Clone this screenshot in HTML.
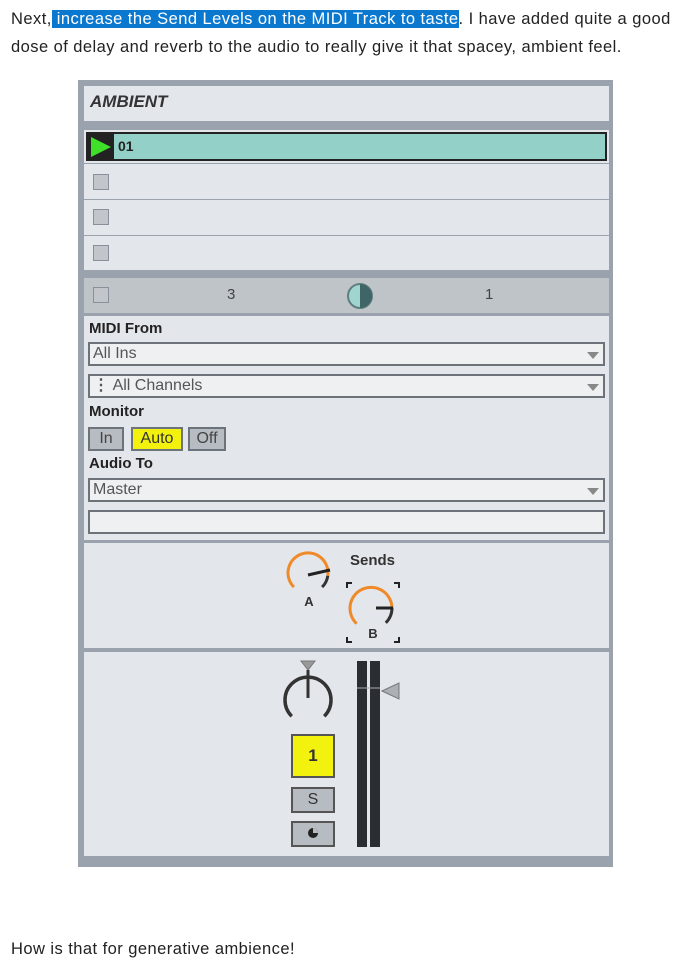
<!DOCTYPE html>
<html><head><meta charset="utf-8"><style>
*{margin:0;padding:0;box-sizing:border-box}
body{width:681px;height:965px;background:#fff;position:relative;overflow:hidden;font-family:"Liberation Sans",sans-serif;color:#222}
.t{position:absolute;left:11px;font-size:16.5px;letter-spacing:0.45px;white-space:nowrap;line-height:20px}
.hl{background:#0b78d0;color:#fff}
.a{position:absolute}
.p{position:absolute;background:#e3e6ea}
.row{position:absolute;left:84px;width:525px;background:#e3e6ea;border-bottom:1px solid #9ba3ad}
.cb{position:absolute;left:93px;width:16px;height:16px;background:#c2c6cb;border:1px solid #8a9099}
.lbl{position:absolute;left:89px;font-weight:bold;font-size:15px;color:#222}
.dd{position:absolute;left:88px;width:517px;height:24px;border:2px solid #6d737a;background:#eef0f2;font-size:16px;color:#555;padding-left:3px;line-height:20px}
.dd .ar{position:absolute;right:4px;top:8px;width:0;height:0;border-left:6px solid transparent;border-right:6px solid transparent;border-top:7px solid #888}
.btn{position:absolute;top:427px;height:24px;border:2px solid #6d737a;background:#b7bcc2;font-size:16px;color:#444;text-align:center;line-height:20px}
</style></head><body>
<div class="t" style="top:9px">Next,<span class="hl"> increase the Send Levels on the MIDI Track to taste</span>. I have added quite a good</div>
<div class="t" style="top:37px">dose of delay and reverb to the audio to really give it that spacey, ambient feel.</div>
<div class="t" style="top:939px">How is that for generative ambience!</div>

<div class="a" style="left:78px;top:80px;width:535px;height:787px;background:#9aa3ad"></div>
<div class="p" style="left:84px;top:86px;width:525px;height:35px"></div>
<div class="a" style="left:90px;top:92px;font-weight:bold;font-style:italic;font-size:17px;color:#333">AMBIENT</div>

<div class="a" style="left:84px;top:130px;width:525px;height:33px;background:#e3e6ea"></div>
<div class="a" style="left:86px;top:132px;width:521px;height:29px;background:#93d0c8;border:2px solid #222"></div>
<div class="a" style="left:86px;top:132px;width:28px;height:29px;background:#222"></div>
<svg class="a" style="left:89px;top:136px" width="24" height="22"><polygon points="2,1 22,11 2,21" fill="#3fe02a"/></svg>
<div class="a" style="left:118px;top:138px;font-weight:bold;font-size:14px;color:#222">01</div>

<div class="row" style="top:164px;height:36px"></div><div class="cb" style="top:174px"></div>
<div class="row" style="top:200px;height:36px"></div><div class="cb" style="top:209px"></div>
<div class="row" style="top:236px;height:35px"></div><div class="cb" style="top:245px"></div>

<div class="a" style="left:84px;top:278px;width:525px;height:35px;background:#bfc4c9"></div>
<div class="cb" style="top:287px"></div>
<div class="a" style="left:227px;top:286px;font-size:15px;color:#444">3</div>
<svg class="a" style="left:346px;top:282px" width="28" height="28"><circle cx="14" cy="14" r="12" fill="#9fd4cf" stroke="#5f7f80" stroke-width="2"/><path d="M14 2 A12 12 0 0 1 14 26 Z" fill="#3f6566"/></svg>
<div class="a" style="left:485px;top:286px;font-size:15px;color:#444">1</div>

<div class="p" style="left:84px;top:316px;width:525px;height:224px"></div>
<div class="lbl" style="top:320px">MIDI From</div>
<div class="dd" style="top:342px">All Ins<div class="ar"></div></div>
<div class="dd" style="top:374px"><span style="font-weight:bold;color:#555">⋮</span> All Channels<div class="ar"></div></div>
<div class="lbl" style="top:403px">Monitor</div>
<div class="btn" style="left:88px;width:36px">In</div>
<div class="btn" style="left:131px;width:52px;background:#f2f20e;color:#333">Auto</div>
<div class="btn" style="left:188px;width:38px">Off</div>
<div class="lbl" style="top:455px">Audio To</div>
<div class="dd" style="top:478px">Master<div class="ar"></div></div>
<div class="dd" style="top:510px"></div>

<div class="p" style="left:84px;top:543px;width:525px;height:105px"></div>
<div class="a" style="left:350px;top:552px;font-weight:bold;font-size:15px;color:#333">Sends</div>
<svg class="a" style="left:280px;top:545px" width="140" height="103">
<path d="M13.9 42.1 A20 20 0 1 1 47.8 30.8" fill="none" stroke="#f08a28" stroke-width="3"/>
<path d="M47.8 30.8 A20 20 0 0 1 42.1 42.1" fill="none" stroke="#333" stroke-width="3"/>
<line x1="28" y1="30" x2="50" y2="25" stroke="#222" stroke-width="3"/>
<text x="29" y="61" font-family="Liberation Sans" font-weight="bold" font-size="13" text-anchor="middle" fill="#333">A</text>
<path d="M76.6 78.6 A21 21 0 1 1 112 63" fill="none" stroke="#f08a28" stroke-width="3"/>
<path d="M112 63 A21 21 0 0 1 105.8 77.8" fill="none" stroke="#333" stroke-width="3"/>
<line x1="96" y1="63" x2="113" y2="63" stroke="#222" stroke-width="3"/>
<text x="93" y="93" font-family="Liberation Sans" font-weight="bold" font-size="13" text-anchor="middle" fill="#333">B</text>
<path d="M67 43 V38 H72 M114 38 H119 V43 M67 92 V97 H72 M114 97 H119 V92" fill="none" stroke="#222" stroke-width="2"/>
</svg>

<div class="p" style="left:84px;top:652px;width:525px;height:204px"></div>
<svg class="a" style="left:280px;top:655px" width="160" height="200">
<polygon points="21,6 35,6 28,15" fill="#999" stroke="#777"/>
<path d="M11.7 61.3 A23 23 0 1 1 44.3 61.3" fill="none" stroke="#333" stroke-width="3.5"/>
<line x1="28" y1="15" x2="28" y2="43" stroke="#333" stroke-width="3"/>
<rect x="77" y="6" width="10" height="186" fill="#2a2d31"/>
<rect x="90" y="6" width="10" height="186" fill="#2a2d31"/>
<line x1="77" y1="33" x2="100" y2="33" stroke="#aaa" stroke-width="1"/>
<polygon points="102,36 119,28 119,44" fill="#aab0b6" stroke="#777"/>
</svg>
<div class="a" style="left:291px;top:734px;width:44px;height:44px;background:#f2f20e;border:2px solid #555;text-align:center;line-height:40px;font-weight:bold;font-size:17px;color:#333">1</div>
<div class="a" style="left:291px;top:787px;width:44px;height:26px;background:#b7bcc2;border:2px solid #555;text-align:center;line-height:22px;font-size:16px;color:#333">S</div>
<div class="a" style="left:291px;top:821px;width:44px;height:26px;background:#b7bcc2;border:2px solid #555"></div>
<svg class="a" style="left:306px;top:826px" width="14" height="14"><circle cx="7" cy="7" r="5" fill="#222"/><path d="M7 7 V2 A5 5 0 0 1 12 7 Z" fill="#bbb"/></svg>
</body></html>
